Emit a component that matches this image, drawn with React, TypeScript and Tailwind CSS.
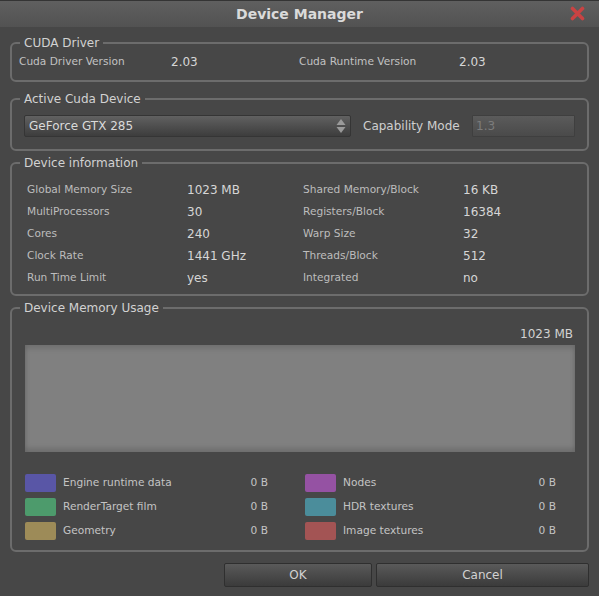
import type { ReactNode } from 'react';

const legendCls = 'ml-[8px] px-[4px] text-[12px] leading-[16px] text-[#d2d2d2]';
const fieldsetCls = 'rounded-[6px] border-2 border-[#6c6c6c] p-0';

function Group({ title, className, children }: { title: string; className: string; children: ReactNode }) {
  return (
    <fieldset className={`${fieldsetCls} ${className}`}>
      <legend className={legendCls}>{title}</legend>
      {children}
    </fieldset>
  );
}

const info = [
  ['Global Memory Size', '1023 MB', 'Shared Memory/Block', '16 KB'],
  ['MultiProcessors', '30', 'Registers/Block', '16384'],
  ['Cores', '240', 'Warp Size', '32'],
  ['Clock Rate', '1441 GHz', 'Threads/Block', '512'],
  ['Run Time Limit', 'yes', 'Integrated', 'no'],
];

const usage = [
  { label: 'Engine runtime data', color: 'bg-[#5956a6]' },
  { label: 'Nodes', color: 'bg-[#9552a3]' },
  { label: 'RenderTarget film', color: 'bg-[#4d9b6c]' },
  { label: 'HDR textures', color: 'bg-[#4b8d9b]' },
  { label: 'Geometry', color: 'bg-[#9d8b58]' },
  { label: 'Image textures', color: 'bg-[#a35454]' },
];

export default function App() {
  return (
    <div className="flex h-[596px] w-[599px] flex-col overflow-hidden bg-[#474747] font-['DejaVu_Sans',sans-serif]">
      {/* title bar */}
      <div className="relative flex h-[27px] shrink-0 items-center justify-center border-t border-[#343434] bg-gradient-to-b from-[#5f5f5f] to-[#525252]">
        <span className="text-[14px] font-bold text-[#dadada]">Device Manager</span>
        <svg className="absolute right-[14px] top-[5px] h-[15px] w-[15px]" viewBox="0 0 15 15">
          <path d="M2.5 2.5 L12.5 12.5 M12.5 2.5 L2.5 12.5" stroke="#c94343" strokeWidth="3.6" strokeLinecap="round" />
        </svg>
      </div>

      <div className="flex flex-col px-[10px]">
        <Group title="CUDA Driver" className="mt-[8px]">
          <div className="mt-[3px] mb-[10px] flex h-[16px] items-center pl-[7px]">
            <span className="w-[152px] text-[10.6px] text-[#c2c2c2]">Cuda Driver Version</span>
            <span className="w-[128px] text-[12px] text-[#d6d6d6]">2.03</span>
            <span className="w-[160px] text-[10.6px] text-[#c2c2c2]">Cuda Runtime Version</span>
            <span className="text-[12px] text-[#d6d6d6]">2.03</span>
          </div>
        </Group>

        <Group title="Active Cuda Device" className="mt-[9px]">
          <div className="flex items-center pl-[12px] pr-[12px] pt-[8px] pb-[12px]">
            <div className="flex h-[22px] w-[327px] items-center justify-between rounded-[2px] border border-[#353535] bg-gradient-to-b from-[#616161] to-[#3d3d3d] pl-[4px] pr-[4px]">
              <span className="text-[12px] text-[#dadada]">GeForce GTX 285</span>
              <svg className="h-[16px] w-[10px]" viewBox="0 0 10 16">
                <path d="M5 1 L9.5 7 L0.5 7 Z" fill="#9a9a9a" />
                <path d="M5 15 L9.5 9 L0.5 9 Z" fill="#9a9a9a" />
              </svg>
            </div>
            <span className="ml-[12px] w-[109px] text-[12px] text-[#cfcfcf]">Capability Mode</span>
            <div className="flex h-[22px] w-[103px] items-center rounded-[1px] border border-[#3f3f3f] bg-gradient-to-b from-[#5b5b5b] to-[#4a4a4a] pl-[3px]">
              <span className="text-[12px] text-[#7c7c7c]">1.3</span>
            </div>
          </div>
        </Group>

        <Group title="Device information" className="mt-[4px]">
          <div className="grid grid-cols-[160px_116px_160px_1fr] pl-[15px] pt-[8px] pb-[5px]">
            {info.map((r) => (
              <div key={r[0]} className="contents">
                <span className="flex h-[22px] items-center text-[10.6px] text-[#bdbdbd]">{r[0]}</span>
                <span className="flex h-[22px] items-center text-[12px] text-[#d6d6d6]">{r[1]}</span>
                <span className="flex h-[22px] items-center text-[10.6px] text-[#bdbdbd]">{r[2]}</span>
                <span className="flex h-[22px] items-center text-[12px] text-[#d6d6d6]">{r[3]}</span>
              </div>
            ))}
          </div>
        </Group>

        <Group title="Device Memory Usage" className="mt-[4px]">
          <div className="flex flex-col pl-[13px] pr-[12px] pt-[10px] pb-[7px]">
            <div className="flex h-[16px] items-center justify-end pr-[2px] text-[12px] text-[#d2d2d2]">1023 MB</div>
            <div className="mt-[3px] h-[107px] bg-[#808080] shadow-[inset_0_4px_5px_rgba(0,0,0,0.12),inset_0_-4px_5px_rgba(0,0,0,0.14)]" />
            <div className="mt-[19px] grid grid-cols-[243px_251px] gap-x-[37px]">
              {usage.map((u) => (
                <div key={u.label} className="flex h-[24px] items-center">
                  <span className={`h-[18px] w-[31px] rounded-[2px] ${u.color}`} />
                  <span className="ml-[7px] flex-1 text-[10.6px] text-[#c4c4c4]">{u.label}</span>
                  <span className="text-[10.6px] text-[#c4c4c4]">0 B</span>
                </div>
              ))}
            </div>
          </div>
        </Group>

        <div className="mt-[11px] flex justify-end gap-[4px]">
          <button type="button" className="h-[24px] w-[148px] rounded-[2px] border border-[#2f2f2f] bg-gradient-to-b from-[#5a5a5a] to-[#3b3b3b] text-[12px] text-[#d2d2d2]">
            OK
          </button>
          <button type="button" className="h-[24px] w-[213px] rounded-[2px] border border-[#2f2f2f] bg-gradient-to-b from-[#5a5a5a] to-[#3b3b3b] text-[12px] text-[#d2d2d2]">
            Cancel
          </button>
        </div>
      </div>
    </div>
  );
}
